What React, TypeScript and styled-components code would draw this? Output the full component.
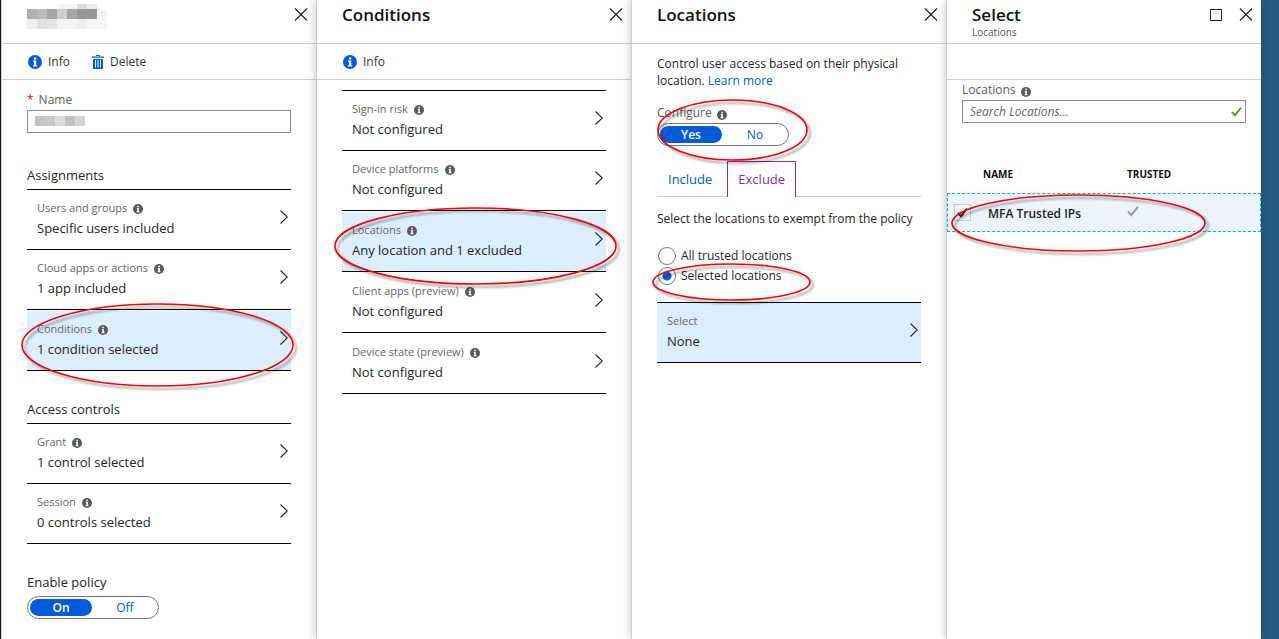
import React, { useState } from "react";
import styled, { createGlobalStyle, css } from "styled-components";

const blue = "#015cda";
const rule = "#cfcfcf";

const GlobalStyle = createGlobalStyle`
  *, *::before, *::after { box-sizing: border-box; }
  body {
    margin: 0;
    background: #fff;
    color: #252525;
    font-family: "Open Sans", "Noto Sans", sans-serif;
    font-size: 13px;
    line-height: 20px;
  }
  button, input { font: inherit; color: inherit; }
`;

const Portal = styled.main`
  display: flex;
  min-height: 100vh;
  padding-left: 1px;
  background: #1d1d1f;
  overflow: hidden;
`;

const Backdrop = styled.div`
  flex: 0 0 18px;
  background: #245a7d;
`;

const Blade = styled.section`
  position: relative;
  flex: 1 1 0;
  min-width: 0;
  background: #fff;
  border-left: 1px solid ${rule};
  box-shadow: -1px 0 8px rgba(0, 0, 0, 0.2);
`;

const BladeHeader = styled.header`
  display: flex;
  justify-content: space-between;
  align-items: flex-start;
  height: 44px;
  padding: 4px 8px 0 25px;
  border-bottom: 1px solid ${rule};
`;

const Title = styled.h2`
  margin: 0;
  font-size: 17px;
  font-weight: 600;
  line-height: 22px;
  color: #111;
`;

const Subtitle = styled.p`
  margin: 0;
  font-size: 10px;
  line-height: 12px;
  color: #555;
`;

const WindowButtons = styled.div`
  display: flex;
  gap: 16px;
  padding-top: 3px;
`;

const IconButton = styled.button`
  display: block;
  width: 14px;
  height: 14px;
  padding: 0;
  border: 0;
  background: none;
`;

const Toolbar = styled.div`
  display: flex;
  align-items: center;
  gap: 22px;
  height: 36px;
  padding: 0 26px;
  border-bottom: 1px solid ${rule};
`;

const Command = styled.button`
  display: flex;
  align-items: center;
  gap: 6px;
  padding: 0;
  border: 0;
  background: none;
  font-size: 12px;
  color: #333;
`;

const Body = styled.div<{ $top: number; $side?: number }>`
  padding: ${(p) => p.$top}px ${(p) => p.$side ?? 25}px 0;
`;

const FieldLabel = styled.label`
  display: flex;
  align-items: center;
  gap: 5px;
  height: 20px;
  font-size: 12px;
  color: #5c5c5c;
  svg { margin-top: 3px; }
`;

const Required = styled.span`
  color: #e81123;
`;

const FieldBox = styled.div`
  position: relative;
`;

const TextInput = styled.input`
  display: block;
  width: 100%;
  height: 23px;
  padding: 0 7px;
  border: 1px solid #8d8d8d;
  border-radius: 0;
  background: #fff;
  font-size: 12px;
  &::placeholder { color: #666; font-style: italic; opacity: 1; }
`;

const MaskedValue = styled.span`
  position: absolute;
  left: 8px;
  top: 6px;
  display: flex;
`;

const ValidMark = styled.span`
  position: absolute;
  right: 4px;
  top: 6px;
  display: flex;
`;

const GroupTitle = styled.h3<{ $gap: number }>`
  margin: ${(p) => p.$gap}px 0 0;
  height: 24px;
  font-size: 13px;
  font-weight: 400;
  line-height: 20px;
`;

const RowList = styled.div`
  border-top: 1px solid #000;
`;

const RowItem = styled.div<{ $spaced?: boolean }>`
  position: relative;
  padding-top: ${(p) => (p.$spaced ? 1 : 0)}px;
  border-bottom: 1px solid #000;
`;

const RowButton = styled.button<{ $selected?: boolean }>`
  display: flex;
  justify-content: space-between;
  width: 100%;
  height: 59px;
  padding: 8px 3px 0 10px;
  border: 0;
  background: ${(p) => (p.$selected ? "#dceeff" : "transparent")};
  text-align: left;
`;

const RowText = styled.span`
  display: flex;
  flex-direction: column;
`;

const RowLabel = styled.span`
  display: flex;
  align-items: center;
  gap: 6px;
  font-size: 11px;
  line-height: 20px;
  color: #666;
  svg { margin-top: 2px; }
`;

const RowChevron = styled.span`
  display: flex;
  padding-top: 12px;
`;

const ToggleFrame = styled.div`
  display: flex;
  gap: 2px;
  width: 132px;
  height: 23px;
  padding: 2px;
  border: 1px solid #777;
  border-radius: 12px;
  background: #fff;
`;

const ToggleOption = styled.label`
  flex: 1;
  border-radius: 9px;
  color: ${blue};
  font-size: 12px;
  line-height: 17px;
  text-align: center;
  input { position: absolute; opacity: 0; pointer-events: none; }
  &:has(input:checked) { background: ${blue}; color: #fff; font-weight: 600; }
`;

const Paragraph = styled.p<{ $gap?: number }>`
  margin: ${(p) => p.$gap ?? 0}px 0 0;
  font-size: 12px;
  line-height: 17px;
`;

const Link = styled.a`
  color: ${blue};
  text-decoration: none;
`;

const ConfigureBlock = styled.div`
  position: relative;
  margin-top: 14px;
`;

const Tabs = styled.div`
  display: flex;
  gap: 4px;
  height: 36px;
  margin-top: 15px;
  box-shadow: inset 0 -1px 0 ${rule};
`;

const Tab = styled.button<{ $active: boolean }>`
  padding: 0 10px 2px;
  border: 1px solid transparent;
  border-bottom: 0;
  background: none;
  color: ${blue};
  ${(p) =>
    p.$active &&
    css`
      border-color: #8a2da5;
      background: #fff;
      color: #8a2da5;
    `}
`;

const RadioGroup = styled.div`
  margin-top: 19px;
`;

const RadioRow = styled.div`
  position: relative;
  height: 20px;
`;

const RadioLabel = styled.label`
  display: flex;
  align-items: center;
  gap: 5px;
  height: 20px;
  font-size: 12px;
`;

const Radio = styled.input`
  appearance: none;
  width: 18px;
  height: 18px;
  margin: 0 0 0 1px;
  border: 1px solid #777;
  border-radius: 50%;
  background: #fff;
  &:checked { background: radial-gradient(circle, ${blue} 4px, #fff 5px); }
`;

const SelectBlock = styled.div`
  margin-top: 16px;
`;

const TableWrap = styled.div`
  position: relative;
  margin-top: 41px;
`;

const Table = styled.table`
  width: 100%;
  border-collapse: collapse;
  table-layout: fixed;
`;

const CheckHead = styled.td`
  width: 36px;
`;

const HeadCell = styled.th<{ $width?: string }>`
  width: ${(p) => p.$width ?? "auto"};
  height: 29px;
  padding: 0 0 10px;
  font-size: 10px;
  font-weight: 700;
  line-height: 18px;
  text-align: left;
  text-transform: uppercase;
  color: #111;
`;

const LocationRow = styled.tr`
  height: 39px;
  background: #ecf5fe;
  outline: 1px dashed #00b3ea;
  outline-offset: -1px;
`;

const Cell = styled.td<{ $indent?: number }>`
  padding: 0 0 0 ${(p) => p.$indent ?? 0}px;
  font-size: 12px;
  font-weight: 600;
  color: #222;
`;

const NameText = styled.span`
  display: block;
  padding-top: 2px;
`;

const CheckBox = styled.input`
  display: block;
  appearance: none;
  width: 17px;
  height: 17px;
  margin: 0;
  border: 1px solid #c8c8c8;
  background: transparent;
`;

const CheckHolder = styled.span`
  position: relative;
  display: block;
  width: 17px;
`;

const CheckGlyph = styled.span`
  position: absolute;
  left: 3px;
  top: 3px;
  display: flex;
  pointer-events: none;
`;

const RingBox = styled.div<{ $inset: string }>`
  position: absolute;
  inset: ${(p) => p.$inset};
  z-index: 2;
  pointer-events: none;
`;

const Ring = styled.svg`
  display: block;
  overflow: visible;
  filter: drop-shadow(3px 3px 1px rgba(0, 0, 0, 0.4));
`;

function Annotation({ inset }: { inset: string }) {
  return (
    <RingBox $inset={inset}>
      <Ring width="100%" height="100%" aria-hidden="true">
        <ellipse cx="50%" cy="50%" rx="50%" ry="50%" fill="none" stroke="#f80000" strokeWidth="1.6" />
      </Ring>
    </RingBox>
  );
}

function InfoDot({ size = 10, color = "#5a5a5a" }: { size?: number; color?: string }) {
  return (
    <svg width={size} height={size} viewBox="0 0 14 14" aria-hidden="true">
      <circle cx="7" cy="7" r="7" fill={color} />
      <path d="M6 2.4h2.2v2H6zM5 5.6h3.2v4.6h1v1.2H5v-1.2h1V6.8H5z" fill="#fff" />
    </svg>
  );
}

function TrashIcon() {
  return (
    <svg width="12" height="14" viewBox="0 0 12 14" aria-hidden="true">
      <path d="M4 .5h4" stroke={blue} strokeWidth="1" />
      <path d="M0 1.5h12v1.3H0zM1 4h10v9.2q0 .8-.8.8H1.8Q1 14 1 13.2z" fill={blue} />
      <path d="M3.5 5v7.5M6 5v7.5M8.5 5v7.5" stroke="#fff" strokeWidth="1" />
    </svg>
  );
}

function CloseIcon() {
  return (
    <svg width="14" height="14" viewBox="0 0 14 14" aria-hidden="true">
      <path d="M1 .5l12 12M13 .5L1 12.500" stroke="#222" strokeWidth="1.2" />
    </svg>
  );
}

function MaximizeIcon() {
  return (
    <svg width="14" height="14" viewBox="0 0 14 14" aria-hidden="true">
      <rect x="1.5" y="1.5" width="11" height="11" fill="none" stroke="#222" />
    </svg>
  );
}

function Chevron() {
  return (
    <svg width="8" height="14" viewBox="0 0 8 14" aria-hidden="true">
      <path d="M.5.5L7.3 7 .5 13.5" fill="none" stroke="#222" strokeWidth="1.1" />
    </svg>
  );
}

function CheckIcon({ size, color }: { size: number; color: string }) {
  return (
    <svg width={size} height={size} viewBox="0 0 12 12" aria-hidden="true">
      <path d="M1 6.5L4.3 10 11 1.8" fill="none" stroke={color} strokeWidth="2.2" />
    </svg>
  );
}

const titleMosaic = [
  { y: 0, h: 5, tones: ["", "", "", "#f4f4f4", "#f4f4f4", "#dcdcdc", "#eeeeee", ""] },
  { y: 5, h: 10, tones: ["#b1b1b1", "#bbbbbb", "#a5a5a5", "#cecece", "#a5a5a5", "#979797", "#979797", "#f2f2f2"] },
  { y: 15, h: 10, tones: ["#eeeeee", "#e0e0e0", "#e5e5e5", "#f4f4f4", "#f4f4f4", "#eeeeee", "#f6f6f6", "#f6f6f6"] },
];
const nameMosaic = [{ y: 0, h: 10, tones: ["#c3c3c3", "#c8c8c8", "#dadada", "#c2c2c2", "#d4d4d4"] }];

function Mosaic({ rows, width, height }: { rows: typeof titleMosaic; width: number; height: number }) {
  return (
    <svg width={width} height={height} aria-hidden="true">
      {rows.flatMap((r) =>
        r.tones.map((tone, i) =>
          tone ? <rect key={`${r.y}-${i}`} x={i * 10} y={r.y} width="10" height={r.h} fill={tone} /> : null
        )
      )}
    </svg>
  );
}

function Header({ title, subtitle, maximize }: { title: React.ReactNode; subtitle?: string; maximize?: boolean }) {
  return (
    <BladeHeader>
      <div>
        <Title>{title}</Title>
        {subtitle && <Subtitle>{subtitle}</Subtitle>}
      </div>
      <WindowButtons>
        {maximize && (
          <IconButton type="button" aria-label="Maximize"><MaximizeIcon /></IconButton>
        )}
        <IconButton type="button" aria-label="Close"><CloseIcon /></IconButton>
      </WindowButtons>
    </BladeHeader>
  );
}

type RowProps = {
  label: string;
  value: string;
  info?: boolean;
  selected?: boolean;
  spaced?: boolean;
  ring?: string;
};

function Row({ label, value, info = true, selected, spaced, ring }: RowProps) {
  return (
    <RowItem $spaced={spaced}>
      <RowButton type="button" $selected={selected}>
        <RowText>
          <RowLabel>{label}{info && <InfoDot />}</RowLabel>
          <span>{value}</span>
        </RowText>
        <RowChevron><Chevron /></RowChevron>
      </RowButton>
      {ring && <Annotation inset={ring} />}
    </RowItem>
  );
}

function Toggle({ name, options }: { name: string; options: string[] }) {
  return (
    <ToggleFrame role="radiogroup" aria-label={name}>
      {options.map((o, i) => (
        <ToggleOption key={o}>
          <input type="radio" name={name} defaultChecked={i === 0} />
          {o}
        </ToggleOption>
      ))}
    </ToggleFrame>
  );
}

export default function App() {
  const [tab, setTab] = useState("Exclude");
  return (
    <>
      <GlobalStyle />
      <Portal>
        <Blade>
          <Header title={<Mosaic rows={titleMosaic} width={80} height={25} />} />
          <Toolbar>
            <Command type="button"><InfoDot size={14} color={blue} />Info</Command>
            <Command type="button"><TrashIcon />Delete</Command>
          </Toolbar>
          <Body $top={10}>
            <FieldLabel htmlFor="policy-name"><Required>*</Required>Name</FieldLabel>
            <FieldBox>
              <TextInput id="policy-name" type="text" />
              <MaskedValue><Mosaic rows={nameMosaic} width={50} height={10} /></MaskedValue>
            </FieldBox>
            <GroupTitle $gap={32}>Assignments</GroupTitle>
            <RowList>
              <Row label="Users and groups" value="Specific users included" />
              <Row label="Cloud apps or actions" value="1 app included" />
              <Row label="Conditions" value="1 condition selected" selected spaced ring="-6px -2px -16px -5px" />
            </RowList>
            <GroupTitle $gap={28}>Access controls</GroupTitle>
            <RowList>
              <Row label="Grant" value="1 control selected" />
              <Row label="Session" value="0 controls selected" />
            </RowList>
            <GroupTitle $gap={28}>Enable policy</GroupTitle>
            <Toggle name="Enable policy" options={["On", "Off"]} />
          </Body>
        </Blade>

        <Blade>
          <Header title="Conditions" />
          <Toolbar>
            <Command type="button"><InfoDot size={14} color={blue} />Info</Command>
          </Toolbar>
          <Body $top={10}>
            <RowList>
              <Row label="Sign-in risk" value="Not configured" />
              <Row label="Device platforms" value="Not configured" />
              <Row label="Locations" value="Any location and 1 excluded" selected spaced ring="-3px -10px -13px -7px" />
              <Row label="Client apps (preview)" value="Not configured" spaced />
              <Row label="Device state (preview)" value="Not configured" spaced />
            </RowList>
          </Body>
        </Blade>

        <Blade>
          <Header title="Locations" />
          <Body $top={11}>
            <Paragraph>
              Control user access based on their physical location. <Link href="#learn">Learn more</Link>
            </Paragraph>
            <ConfigureBlock>
              <FieldLabel as="div">Configure <InfoDot /></FieldLabel>
              <Toggle name="Configure" options={["Yes", "No"]} />
              <Annotation inset="-3px 114px -14px 1px" />
            </ConfigureBlock>
            <Tabs role="tablist">
              {["Include", "Exclude"].map((t) => (
                <Tab key={t} type="button" role="tab" aria-selected={tab === t} $active={tab === t} onClick={() => setTab(t)}>
                  {t}
                </Tab>
              ))}
            </Tabs>
            <Paragraph $gap={13}>Select the locations to exempt from the policy</Paragraph>
            <RadioGroup>
              <RadioRow>
                <RadioLabel><Radio type="radio" name="scope" />All trusted locations</RadioLabel>
              </RadioRow>
              <RadioRow>
                <RadioLabel><Radio type="radio" name="scope" defaultChecked />Selected locations</RadioLabel>
                <Annotation inset="-2px 111px -14px -4px" />
              </RadioRow>
            </RadioGroup>
            <SelectBlock>
              <RowList>
                <Row label="Select" value="None" info={false} selected />
              </RowList>
            </SelectBlock>
          </Body>
        </Blade>

        <Blade>
          <Header title="Select" subtitle="Locations" maximize />
          <Toolbar />
          <Body $top={0} $side={15}>
            <FieldLabel htmlFor="search-locations">Locations <InfoDot /></FieldLabel>
            <FieldBox>
              <TextInput id="search-locations" type="text" placeholder="Search Locations..." />
              <ValidMark><CheckIcon size={11} color="#57a300" /></ValidMark>
            </FieldBox>
          </Body>
          <TableWrap>
            <Table>
              <thead>
                <tr>
                  <CheckHead />
                  <HeadCell $width="144px">Name</HeadCell>
                  <HeadCell>Trusted</HeadCell>
                </tr>
              </thead>
              <tbody>
                <LocationRow>
                  <Cell $indent={7}>
                    <CheckHolder>
                      <CheckBox type="checkbox" defaultChecked aria-label="MFA Trusted IPs" />
                      <CheckGlyph><CheckIcon size={11} color="#222" /></CheckGlyph>
                    </CheckHolder>
                  </Cell>
                  <Cell $indent={5}><NameText>MFA Trusted IPs</NameText></Cell>
                  <Cell><CheckIcon size={12} color="#a0a0a0" /></Cell>
                </LocationRow>
              </tbody>
            </Table>
            <Annotation inset="31px 56px -19px 5px" />
          </TableWrap>
        </Blade>
        <Backdrop />
      </Portal>
    </>
  );
}
